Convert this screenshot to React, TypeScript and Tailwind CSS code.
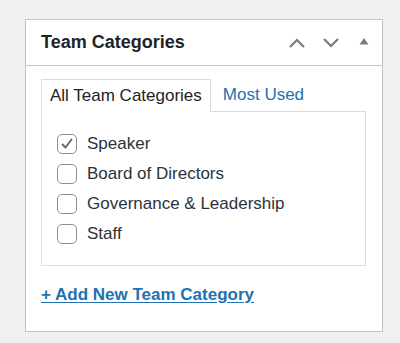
import React from 'react';

const categories = [
  { name: 'Speaker', checked: true },
  { name: 'Board of Directors', checked: false },
  { name: 'Governance & Leadership', checked: false },
  { name: 'Staff', checked: false },
];

const Checkbox: React.FC<{ checked: boolean }> = ({ checked }) => (
  <span className="w-[20px] h-[20px] rounded-[5px] border border-[#8c8f94] bg-white flex items-center justify-center shrink-0">
    {checked && (
      <svg width="14" height="14" viewBox="0 0 14 14" fill="none">
        <path d="M2.5 7.5 L5.5 10.5 L11.5 2.5" stroke="#646970" strokeWidth="2" strokeLinecap="round" strokeLinejoin="round" />
      </svg>
    )}
  </span>
);

export default function App() {
  return (
    <div className="w-[400px] h-[343px] bg-[#f0f0f1] pt-[19px] pl-[25px] font-['Helvetica','Liberation_Sans',sans-serif]">
      <div className="w-[358px] h-[313px] bg-white border border-[#c3c4c7] flex flex-col">
        {/* header */}
        <div className="h-[46px] border-b border-[#c3c4c7] flex items-center pl-[15px] pr-[12px]">
          <h2 className="text-[18px] font-semibold text-[#1d2327] flex-1">Team Categories</h2>
          <div className="flex items-center gap-[16px] text-[#787c82]">
            <svg width="18" height="12" viewBox="0 0 18 12" fill="none">
              <path d="M2 10 L9 3 L16 10" stroke="currentColor" strokeWidth="2.2" />
            </svg>
            <svg width="18" height="12" viewBox="0 0 18 12" fill="none">
              <path d="M2 2 L9 9 L16 2" stroke="currentColor" strokeWidth="2.2" />
            </svg>
            <svg width="12" height="10" viewBox="0 0 12 10" className="ml-[2px] -mt-[4px]">
              <path d="M1.5 8.5 L6 2 L10.5 8.5 Z" fill="currentColor" />
            </svg>
          </div>
        </div>

        {/* body */}
        <div className="pl-[15px] pr-[16px] pt-[12px]">
          <div className="flex items-end h-[33px]">
            <div className="h-[33px] border border-[#dcdcde] border-b-0 bg-white px-[8px] flex items-center text-[17px] text-[#1d2327] relative -mb-px z-10">
              All Team Categories
            </div>
            <div className="h-[33px] px-[12px] flex items-center text-[17px] text-[#2271b1]">Most Used</div>
          </div>
          <div className="h-[155px] border border-[#dcdcde] pt-[17px] pl-[15px] flex flex-col">
            {categories.map((c) => (
              <div key={c.name} className="h-[30px] flex items-center gap-[10px]">
                <Checkbox checked={c.checked} />
                <span className="text-[17px] text-[#2c3338]">{c.name}</span>
              </div>
            ))}
          </div>
          <div className="pt-[16px]">
            <a className="text-[17px] font-semibold text-[#2271b1] underline underline-offset-[2px]">+ Add New Team Category</a>
          </div>
        </div>
      </div>
    </div>
  );
}
